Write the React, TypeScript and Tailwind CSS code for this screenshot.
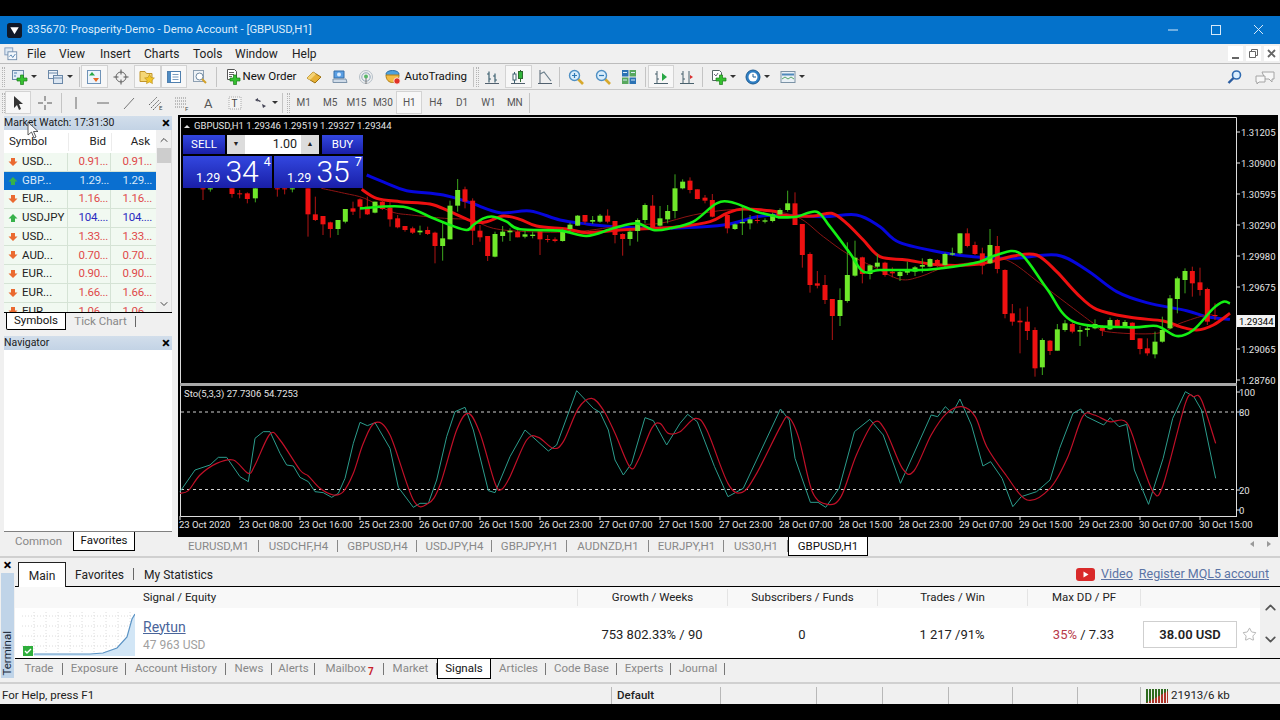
import type { ReactNode } from "react";
import { ChevronUp, ChevronDown, Star } from "lucide-react";

type Candle = number[];

// candles are read off the picture as [x, wickTop, bodyTop, bodyBottom, wickBottom, isGreen]
const seg1: Candle[] = [
  [75, 220, 220, 222, 255, 0], [97, 220, 220, 222, 230, 1], [162, 220, 220, 237, 248, 0], [185, 225, 235, 238, 250, 0],
  [208, 232, 235, 252, 265, 0], [232, 220, 220, 250, 262, 1], [298, 220, 220, 222, 245, 0], [320, 220, 220, 222, 238, 0],
  [343, 220, 220, 222, 232, 1], [390, 220, 220, 298, 365, 0], [412, 245, 298, 315, 318, 0], [435, 303, 303, 328, 360, 0],
  [457, 320, 322, 342, 368, 0], [480, 315, 315, 342, 360, 1], [502, 282, 282, 320, 325, 1], [525, 260, 280, 290, 300, 0],
];
const seg2: Candle[] = [
  [0, 115, 118, 140, 175, 0], [22, 110, 140, 163, 165, 0], [45, 125, 125, 158, 160, 1], [67, 120, 125, 147, 150, 0],
  [90, 125, 143, 178, 200, 0], [113, 165, 175, 202, 205, 0], [135, 198, 198, 210, 215, 0], [158, 200, 205, 218, 222, 0],
  [180, 197, 212, 217, 225, 1], [203, 200, 210, 222, 225, 0], [225, 215, 218, 258, 310, 0], [248, 185, 235, 258, 302, 1],
  [270, 122, 137, 238, 238, 1], [293, 57, 90, 137, 155, 1], [315, 80, 88, 125, 145, 0], [338, 115, 122, 212, 255, 0],
  [360, 195, 212, 232, 245, 0], [383, 228, 228, 288, 303, 0], [405, 215, 222, 290, 292, 1], [428, 198, 215, 228, 245, 1],
  [450, 205, 212, 217, 243, 1], [473, 210, 215, 232, 232, 0], [495, 212, 223, 230, 235, 1], [518, 215, 224, 228, 235, 1],
  [540, 212, 214, 238, 285, 0], [563, 225, 237, 240, 247, 0], [585, 232, 238, 243, 247, 0], [608, 205, 210, 243, 245, 1],
  [630, 188, 194, 207, 215, 1], [653, 165, 167, 197, 198, 1], [675, 165, 165, 185, 192, 0], [698, 168, 180, 185, 192, 1],
  [720, 162, 167, 185, 188, 1], [743, 148, 167, 185, 190, 0], [765, 183, 183, 225, 250, 0], [788, 220, 222, 237, 287, 0],
  [810, 210, 215, 237, 257, 1], [833, 175, 180, 213, 245, 1], [855, 130, 135, 180, 190, 1], [878, 105, 137, 205, 210, 0],
  [900, 138, 175, 197, 200, 1], [923, 135, 153, 178, 190, 1], [945, 43, 85, 153, 175, 1], [968, 58, 65, 85, 88, 1],
  [990, 52, 62, 90, 100, 0], [1012, 88, 88, 117, 118, 0], [1035, 105, 113, 122, 130, 0], [1057, 102, 120, 170, 172, 0],
  [1102, 160, 165, 205, 220, 0], [1125, 190, 193, 207, 210, 1], [1147, 140, 186, 190, 225, 1], [1170, 165, 178, 190, 208, 1],
  [1192, 165, 180, 183, 190, 0], [1215, 175, 181, 185, 190, 1], [1238, 158, 163, 183, 187, 1], [1260, 145, 150, 163, 165, 1],
  [1283, 92, 130, 150, 155, 1], [1305, 97, 130, 195, 195, 0],
];
const seg3: Candle[] = [
  [67, 312, 312, 405, 443, 0], [90, 397, 402, 495, 518, 0], [112, 453, 490, 497, 505, 0], [135, 465, 495, 540, 552, 0],
  [157, 537, 537, 588, 660, 0], [180, 505, 540, 588, 618, 1], [202, 367, 465, 543, 548, 1], [225, 362, 413, 467, 470, 1],
  [247, 410, 412, 462, 490, 0], [270, 433, 436, 462, 478, 1], [292, 402, 428, 440, 445, 1], [315, 425, 428, 465, 470, 0],
  [337, 442, 455, 460, 472, 0], [360, 452, 456, 468, 483, 1], [382, 425, 447, 458, 465, 1], [405, 438, 442, 455, 468, 1],
  [427, 415, 435, 440, 458, 1], [450, 415, 417, 440, 442, 1], [472, 417, 420, 435, 442, 0], [495, 398, 402, 435, 445, 1],
  [517, 383, 400, 404, 407, 1], [540, 340, 340, 400, 403, 1], [562, 325, 340, 378, 382, 0], [585, 365, 375, 402, 405, 0],
  [607, 383, 400, 437, 463, 0], [630, 327, 375, 430, 432, 1], [652, 348, 378, 447, 460, 0], [675, 448, 450, 582, 595, 0],
  [697, 552, 580, 605, 617, 0], [720, 565, 602, 607, 700, 0], [742, 560, 605, 633, 660, 0], [765, 622, 630, 745, 770, 0],
  [787, 655, 660, 742, 765, 1], [810, 660, 662, 693, 705, 0], [832, 612, 628, 692, 692, 1], [855, 600, 610, 630, 635, 1],
  [877, 607, 612, 635, 640, 0], [900, 618, 630, 635, 678, 1], [922, 615, 625, 630, 650, 1], [945, 598, 612, 625, 628, 1],
  [967, 615, 618, 632, 648, 0], [990, 593, 600, 628, 630, 1], [1012, 597, 600, 620, 622, 0], [1035, 600, 606, 618, 622, 1],
  [1057, 607, 608, 660, 660, 0], [1080, 655, 655, 687, 703, 0], [1102, 655, 685, 700, 707, 0], [1125, 635, 665, 703, 715, 1],
  [1147, 590, 630, 665, 668, 1], [1170, 525, 535, 625, 628, 1], [1192, 470, 475, 537, 580, 1], [1215, 445, 453, 480, 520, 1],
  [1237, 440, 453, 490, 530, 0], [1260, 443, 487, 510, 527, 0], [1282, 503, 507, 605, 615, 0], [1305, 550, 585, 587, 600, 0],
];

type Pt = [number, number];

const map = (ox: number, oy: number, sx: number, sy: number, a: number[]) => {
  const out: Pt[] = [];
  for (let i = 0; i < a.length; i += 2) out.push([ox + a[i] / sx, oy + a[i + 1] / sy]);
  return out;
};

// catmull-rom through the points, the moving averages are smooth in the picture
const smooth = (p: Pt[]) => {
  let d = `M${p[0][0]} ${p[0][1]}`;
  for (let i = 0; i < p.length - 1; i++) {
    const a = p[Math.max(i - 1, 0)];
    const b = p[i];
    const c = p[i + 1];
    const e = p[Math.min(i + 2, p.length - 1)];
    d += `C${b[0] + (c[0] - a[0]) / 6} ${b[1] + (c[1] - a[1]) / 6} ${c[0] - (e[0] - b[0]) / 6} ${c[1] - (e[1] - b[1]) / 6} ${c[0]} ${c[1]}`;
  }
  return d;
};

const blue = smooth([
  ...map(360, 160, 3, 3, [20, 45, 80, 70, 140, 92, 250, 105, 330, 128, 420, 158, 510, 153, 600, 180, 680, 192, 760, 200, 900, 205, 1090, 195, 1190, 170]),
  ...map(780, 120, 3, 3, [0, 285, 130, 290, 230, 285, 300, 320, 360, 368, 500, 400, 580, 410, 700, 415, 830, 405, 920, 450, 1010, 515, 1100, 548, 1220, 572, 1280, 590, 1350, 598]),
]);
const red = smooth([
  ...map(360, 160, 3, 3, [5, 88, 50, 115, 120, 125, 210, 132, 270, 155, 340, 185, 380, 185, 430, 168, 480, 178, 530, 198, 620, 207, 680, 218, 780, 210, 880, 205, 960, 200, 1050, 185, 1100, 160, 1150, 147, 1250, 155]),
  ...map(780, 120, 3, 3, [0, 285, 100, 288, 155, 280, 200, 310, 250, 360, 300, 410, 380, 420, 480, 435, 600, 432, 700, 408, 770, 405, 830, 455, 890, 520, 950, 568, 1050, 592, 1150, 603, 1200, 620, 1250, 630, 1300, 615, 1350, 580]),
]);
const green = smooth([
  ...map(360, 160, 3, 3, [0, 145, 130, 140, 220, 175, 270, 195, 320, 210, 340, 195, 370, 175, 400, 170, 440, 185, 480, 208, 600, 212, 680, 228, 760, 205, 830, 190, 880, 210, 930, 205, 1000, 185, 1070, 130, 1120, 128, 1190, 155, 1250, 170]),
  ...map(780, 120, 3, 3, [0, 292, 50, 290, 110, 275, 150, 320, 210, 400, 250, 455, 300, 450, 420, 450, 520, 440, 600, 425, 650, 405, 720, 400, 800, 505, 880, 605, 1050, 622, 1130, 618, 1190, 648, 1240, 630, 1300, 565, 1330, 545, 1350, 550]),
]);
const thin = smooth([
  ...map(178, 115, 3, 3, [430, 220, 500, 235, 560, 250, 640, 290, 700, 300, 800, 310, 880, 315]),
  ...map(360, 160, 3, 3, [400, 205, 500, 215, 650, 215, 800, 195, 900, 190, 1000, 165, 1100, 150, 1200, 150]),
  ...map(780, 120, 3, 3, [50, 290, 130, 350, 200, 400, 280, 440, 360, 478, 420, 470, 500, 440, 600, 425, 680, 420, 780, 490, 860, 550, 940, 610, 980, 635, 1130, 640, 1200, 610, 1280, 585, 1310, 590]),
]);
const stoMain = [
  ...map(180, 380, 3, 3, [0, 335, 45, 270, 90, 255, 115, 232, 140, 232, 180, 290, 205, 305, 225, 175, 250, 155, 270, 155, 300, 220, 320, 255, 340, 258, 360, 292, 385, 305, 405, 335, 430, 338, 455, 352, 475, 340, 495, 295, 520, 190, 540, 127, 562, 137, 585, 128, 630, 205, 655, 322, 700, 382, 720, 370, 745, 370, 770, 300, 800, 170, 825, 95, 855, 82, 880, 150, 925, 332, 945, 338, 990, 230, 1035, 150, 1105, 213, 1130, 195, 1190, 32, 1240, 85, 1260, 97, 1285, 150, 1305, 240, 1330, 285, 1355, 250, 1395, 113, 1420, 122, 1460, 195, 1500, 130]),
  ...map(680, 385, 2.608, 3, [20, 88, 45, 110, 90, 245, 125, 335, 165, 310, 262, 72, 285, 105, 300, 220, 340, 352, 360, 352, 380, 367, 415, 310, 455, 140, 495, 103, 530, 150, 575, 295, 655, 90, 672, 95, 692, 65, 710, 85, 730, 42, 760, 120, 790, 243, 810, 230, 840, 280, 868, 365, 890, 335, 930, 320, 965, 285, 990, 190, 1025, 85, 1045, 72, 1060, 95, 1105, 120, 1122, 98, 1145, 125, 1165, 118, 1185, 255, 1222, 358, 1260, 220, 1285, 100, 1318, 20, 1340, 35, 1360, 75, 1397, 280]),
].join(" ");
const stoSignal = smooth([
  ...map(180, 380, 3, 3, [0, 340, 25, 332, 60, 285, 110, 250, 160, 240, 205, 280, 225, 255, 270, 162, 300, 180, 360, 270, 385, 288, 420, 325, 460, 345, 490, 335, 520, 280, 550, 190, 585, 128, 630, 165, 700, 360, 745, 370, 780, 315, 830, 150, 865, 100, 900, 160, 945, 310, 965, 328, 990, 290, 1040, 180, 1075, 172, 1120, 205, 1150, 185, 1195, 85, 1235, 55, 1270, 90, 1305, 160, 1350, 262, 1375, 240, 1415, 145, 1440, 130, 1465, 160, 1500, 155]),
  ...map(680, 385, 2.608, 3, [40, 100, 70, 135, 125, 295, 162, 322, 200, 265, 262, 125, 283, 97, 310, 160, 345, 320, 385, 358, 420, 335, 460, 210, 505, 113, 535, 135, 580, 250, 610, 258, 655, 150, 695, 85, 735, 65, 770, 95, 800, 185, 850, 270, 905, 345, 965, 310, 1010, 220, 1050, 95, 1080, 90, 1120, 110, 1165, 113, 1200, 220, 1235, 322, 1260, 300, 1318, 55, 1340, 35, 1360, 45, 1397, 175]),
]);

const prices: [string, number][] = [
  ["1.31205", 132], ["1.30900", 163], ["1.30595", 194], ["1.30290", 225], ["1.29980", 256],
  ["1.29675", 287], ["1.29065", 349], ["1.28760", 380],
];
const stoLevels: [string, number][] = [["100", 392], ["80", 412], ["20", 490], ["0", 510]];
const times = [
  "23 Oct 2020", "23 Oct 08:00", "23 Oct 16:00", "25 Oct 23:00", "26 Oct 07:00", "26 Oct 15:00", "26 Oct 23:00", "27 Oct 07:00", "27 Oct 15:00",
  "27 Oct 23:00", "28 Oct 07:00", "28 Oct 15:00", "28 Oct 23:00", "29 Oct 07:00", "29 Oct 15:00", "29 Oct 23:00", "30 Oct 07:00", "30 Oct 15:00",
];

function Candles({ data, ox, oy }: { data: Candle[]; ox: number; oy: number }) {
  return (
    <>
      {data.map((c) => {
        const x = ox + c[0] / 3;
        return (
          <g key={c[0]}>
            <line x1={x} x2={x} y1={oy + c[1] / 3} y2={oy + c[4] / 3} stroke={c[5] ? "#3da81e" : "#b01414"} strokeWidth="1" />
            <rect x={x - 2.5} width="5" y={oy + c[2] / 3} height={Math.max((c[3] - c[2]) / 3, 1)} fill={c[5] ? "#6fe82a" : "#ee1111"} />
          </g>
        );
      })}
    </>
  );
}

function PriceChart() {
  return (
    <svg viewBox="178 115 1100 421" className="block h-[421px] w-[1100px]">
      <path d="M180.5 384V117.5H1236.5V517" fill="none" stroke="#dcdcdc" strokeWidth="1" />
      <path d="M180.5 386V516.5H1236.5" fill="none" stroke="#dcdcdc" strokeWidth="1" />
      <rect x="180" y="383" width="1057" height="3" fill="#a8a8a8" />
      <path d={blue} fill="none" stroke="#0606dc" strokeWidth="3" strokeLinejoin="round" />
      <path d={thin} fill="none" stroke="#8c1414" strokeWidth="1" strokeLinejoin="round" />
      <path d={red} fill="none" stroke="#ee1010" strokeWidth="3" strokeLinejoin="round" />
      <Candles data={seg1} ox={178} oy={115} />
      <Candles data={seg2} ox={360} oy={160} />
      <Candles data={seg3} ox={780} oy={120} />
      <path d={green} fill="none" stroke="#14f014" strokeWidth="2.6" strokeLinejoin="round" />

      <line x1="181" x2="1236" y1="412" y2="412" stroke="#d0d0d0" strokeDasharray="3 3" />
      <line x1="181" x2="1236" y1="489.5" y2="489.5" stroke="#d0d0d0" strokeDasharray="3 3" />
      <polyline points={stoMain} fill="none" stroke="#2b9c8c" strokeWidth="1" strokeLinejoin="round" />
      <path d={stoSignal} fill="none" stroke="#c01028" strokeWidth="1.2" strokeLinejoin="round" />

      <g fill="#e4e4e4" fontSize="9.5">
        <path d="M184 128l3-3 3 3z" />
        <text x="194" y="128.5">GBPUSD,H1  1.29346 1.29519 1.29327 1.29344</text>
        <text x="184" y="396.5">Sto(5,3,3) 27.7306 54.7253</text>
        {prices.map(([p, y]) => (
          <g key={p}>
            <line x1="1236" x2="1240" y1={y} y2={y} stroke="#e8e8e8" />
            <text x="1241" y={y + 3.5}>{p}</text>
          </g>
        ))}
        {stoLevels.map(([p, y]) => (
          <g key={p}>
            <line x1="1236" x2="1240" y1={y} y2={y} stroke="#e8e8e8" />
            <text x="1239" y={y + 3.5}>{p}</text>
          </g>
        ))}
        {times.map((t, i) => (
          <g key={t}>
            <line x1={180 + i * 60} x2={180 + i * 60} y1="516" y2="520" stroke="#e8e8e8" />
            <text x={179 + i * 60} y="528">{t}</text>
          </g>
        ))}
        <rect x="1237" y="315" width="38" height="12" fill="#f2f2f2" />
        <text x="1239" y="324.5" fill="#000">1.29344</text>
      </g>
    </svg>
  );
}

const blueBtn = "bg-gradient-to-b from-[#3347e0] to-[#1a1ea8] text-white";

function TradePanel() {
  return (
    <div className="absolute left-[5px] top-[20px] flex w-[180px] flex-col gap-[2px] text-white">
      <div className="flex h-[19px] items-center">
        <div className={`flex h-full w-[42px] items-center justify-center text-[11.5px] text-[#dfe4ff] ${blueBtn}`}>SELL</div>
        <div className="ml-[2px] flex h-full w-[92px] items-stretch bg-[#dcdcdc] text-[#222]">
          <div className="flex w-[18px] items-center justify-center text-[7px]">▼</div>
          <div className="flex flex-1 items-center justify-end bg-white pr-[4px] text-[12.5px]">1.00</div>
          <div className="flex w-[18px] items-center justify-center text-[7px]">▲</div>
        </div>
        <div className={`ml-[3px] flex h-full w-[41px] items-center justify-center text-[11.5px] text-[#dfe4ff] ${blueBtn}`}>BUY</div>
      </div>
      <div className="flex h-[32px] gap-[2px]">
        <PriceBox big="34" small="4" />
        <PriceBox big="35" small="7" />
      </div>
    </div>
  );
}

function PriceBox({ big, small }: { big: string; small: string }) {
  return (
    <div className={`relative flex w-[89px] items-end pl-[13px] ${blueBtn}`}>
      <span className="mb-[4px] text-[12.5px] leading-none">1.29</span>
      <span className="ml-[5px] text-[30px] font-light leading-[32px]">{big}</span>
      <span className="mb-[20px] ml-[5px] text-[12.5px] leading-none">{small}</span>
    </div>
  );
}

function Ico({ children, size = "h-4 w-4" }: { children: ReactNode; size?: string }) {
  return (
    <svg viewBox="0 0 16 16" className={`${size} shrink-0`}>
      {children}
    </svg>
  );
}

const plus = <path d="M8.5 6h3v3H15v3h-3.5v3.5h-3V12H5V9h3.5z" fill="#35c030" stroke="#1a7d1a" strokeWidth="0.7" />;

const icons: Record<string, ReactNode> = {
  newChart: <><rect x="0.5" y="1.5" width="11" height="9" fill="#e3edf7" stroke="#6b88a8" /><path d="M2 4h3M2 7h2" stroke="#4b7dab" />{plus}</>,
  profiles: <><rect x="0.5" y="1.5" width="9" height="8" fill="#eef3f9" stroke="#6b88a8" /><rect x="5.5" y="6.5" width="9" height="8" fill="#dbe6f2" stroke="#6b88a8" /><path d="M1 4h8M6 9h8" stroke="#6b88a8" /></>,
  market: <><rect x="1.5" y="1.5" width="13" height="13" fill="#edf4fb" stroke="#6f93b8" /><path d="M6 3l3 3.5H3z" fill="#27a845" /><path d="M7 9h6l-3 4z" fill="#e8691f" /></>,
  target: <><circle cx="8" cy="8" r="5" fill="none" stroke="#666" /><path d="M8 0.5v5M8 10.5v5M0.5 8h5M10.5 8h5" stroke="#555" /></>,
  folder: <><path d="M1 2.5h5l1.5 2H13v8H1z" fill="#f5d776" stroke="#c2962b" /><path d="M10.5 5.5l1.5 3 3.4 0.5-2.5 2.3 0.6 3.3-3-1.6-3 1.6 0.6-3.3L5.6 9 9 8.5z" fill="#f3c627" stroke="#b98d18" strokeWidth="0.6" /></>,
  list: <><rect x="1.5" y="2.5" width="13" height="11" fill="#fff" stroke="#4f7fae" /><rect x="2" y="3" width="3" height="10" fill="#4f8cc4" /><path d="M6.5 5.5h6M6.5 8h6M6.5 10.5h6" stroke="#7a9cbe" /></>,
  tester: <><rect x="1.5" y="1.5" width="10" height="11" fill="#eef2f6" stroke="#8ea0b2" /><circle cx="7.5" cy="7.5" r="3.5" fill="#fff" stroke="#708aa3" /><path d="M10 10l4 4" stroke="#d3a12a" strokeWidth="2" /></>,
  order: <><path d="M2.5 0.5h7l2 2v8h-9z" fill="#fff" stroke="#555" /><path d="M4 3.5h5M4 5.5h5M4 7.5h3" stroke="#666" />{plus}</>,
  diamond: <><path d="M1 9l6-6 8 5-6 6z" fill="#e7b136" stroke="#9c7112" /><path d="M1 9l6-6 3 2-6 6z" fill="#f5d376" /></>,
  editor: <><path d="M2 2h10v7H2z" fill="#5b9fe3" stroke="#376fa8" /><circle cx="7" cy="5.5" r="2" fill="#d9ecff" /><path d="M1 10h13l1 3.5H1z" fill="#cfdbe8" stroke="#7c93aa" /></>,
  radio: <><circle cx="8" cy="8" r="6.5" fill="none" stroke="#b6c0c8" /><circle cx="8" cy="8" r="4.2" fill="none" stroke="#8fa6b8" /><circle cx="8" cy="7.5" r="2" fill="#58b868" /><path d="M8 9v6" stroke="#777" /></>,
  auto: <><ellipse cx="7.5" cy="5" rx="6.5" ry="3.5" fill="#4ea2dc" stroke="#2c6fa5" /><path d="M1 6c0 5 3 7.5 6.5 7.5S14 11 14 6z" fill="#f2bc45" stroke="#b27f16" /><circle cx="12" cy="12" r="3.2" fill="#e03226" stroke="#fff" strokeWidth="0.8" /></>,
  bars: <><path d="M1 14.5h14" stroke="#51606e" /><path d="M5 2.5v11M3 5h2M5 10h2M11 4.5v9M9 7h2M11 11h2" stroke="#3d6070" fill="none" strokeWidth="1.2" /></>,
  candles: <><path d="M1 14.5h14" stroke="#51606e" /><path d="M4.5 3v11" stroke="#3d6070" /><rect x="3" y="5" width="3" height="6" fill="#fff" stroke="#3d6070" /><path d="M10.5 1v12" stroke="#2d6a30" /><rect x="8.5" y="2.5" width="4" height="7" fill="#31b53a" stroke="#2d6a30" /></>,
  lineChart: <><path d="M1 14.5h14M3 1v13" stroke="#51606e" /><path d="M3 5l4-2 7 9" fill="none" stroke="#6b7f8c" strokeWidth="1.2" /></>,
  zoomIn: <><path d="M10 10l5 5" stroke="#d7a92d" strokeWidth="2.6" /><circle cx="6.5" cy="6.5" r="5" fill="#d9edfb" stroke="#4f90c4" strokeWidth="1.4" /><path d="M4 6.5h5M6.5 4v5" stroke="#2e79b5" strokeWidth="1.2" /></>,
  zoomOut: <><path d="M10 10l5 5" stroke="#d7a92d" strokeWidth="2.6" /><circle cx="6.5" cy="6.5" r="5" fill="#d9edfb" stroke="#4f90c4" strokeWidth="1.4" /><path d="M4 6.5h5" stroke="#2e79b5" strokeWidth="1.2" /></>,
  tile: <><rect x="1" y="1" width="6.5" height="6.5" fill="#2c73b4" /><rect x="8.5" y="1" width="6.5" height="6.5" fill="#58a85e" /><rect x="1" y="8.5" width="6.5" height="6.5" fill="#58a85e" /><rect x="8.5" y="8.5" width="6.5" height="6.5" fill="#2c73b4" /><path d="M2 3.5h4M10 3.5h4M2 11h4M10 11h4" stroke="#d8ecf8" /></>,
  scroll: <><path d="M1 14.5h14M4 2v12M2 5h2M4 10h2" stroke="#48606c" /><path d="M9 4l5 4-5 4z" fill="#28a745" /></>,
  shift: <><path d="M1 14.5h14M4 2v12M2 5h2M4 10h2M10 2v12" stroke="#48606c" /><path d="M11 6l3 2-3 2z" fill="#d93030" /></>,
  indicator: <><path d="M1.5 1.5h7l2 2v8h-9z" fill="#fff" stroke="#556666" /><path d="M3 5l2 2 2-3" fill="none" stroke="#667" />{plus}</>,
  clock: <><circle cx="8" cy="8" r="7" fill="#2f7fc4" stroke="#1d5c93" /><circle cx="8" cy="8" r="4.5" fill="#fff" /><path d="M8 5v3h3" stroke="#1d5c93" fill="none" /></>,
  template: <><rect x="1" y="2.5" width="14" height="11" fill="#e9f0f6" stroke="#7c93a6" /><path d="M2 5.5h12" stroke="#4f89bb" strokeWidth="2" /><path d="M2 10l3-2 3 2 3-2 3 2" fill="none" stroke="#59a768" /></>,
  cursor: <path d="M4 1l0 12 3-3 2 5 2-1-2-5h4z" fill="#333" />,
  cross: <path d="M8 1v5M8 10v5M1 8h5M10 8h5" stroke="#555" />,
  vline: <path d="M8 2v12" stroke="#666" />,
  hline: <path d="M2 8h12" stroke="#666" />,
  trend: <path d="M3 14L13 3" stroke="#777" />,
  channel: <><path d="M1 10L9 2M3 13L11 5M5 15L13 7" stroke="#666" strokeDasharray="2 1" /><text x="11" y="15" fontSize="6" fill="#444">E</text></>,
  fibo: <><path d="M1 3h12M1 6h12M1 9h12M1 12h9" stroke="#888" strokeDasharray="1 1" /><text x="11" y="15.5" fontSize="6" fill="#444">F</text></>,
  letter: <text x="3" y="13" fontSize="13" fill="#555">A</text>,
  textBox: <><rect x="2" y="2" width="12" height="12" fill="#f4f4f4" stroke="#aaa" strokeDasharray="1 1" /><text x="4.5" y="12" fontSize="10" fill="#444">T</text></>,
  arrows: <path d="M2 5l3-2v1.5L8 6l-1 1-3-1.5L5 7zM9 9l4 2-3 2z" fill="#445" />,
};

function Caret() {
  return <span className="ml-[3px] h-0 w-0 border-x-[3px] border-t-[3px] border-x-transparent border-t-[#333]" />;
}

function Btn({ icon, on, caret, cls = "w-[26.5px]" }: { icon: string; on?: boolean; caret?: boolean; cls?: string }) {
  return (
    <div className={`flex h-[23px] shrink-0 items-center justify-center ${cls} ${on ? "border border-[#d3d3d3] bg-[#f7f7f7]" : ""}`}>
      <Ico>{icons[icon]}</Ico>
      {caret && <Caret />}
    </div>
  );
}

function Sep({ cls = "" }: { cls?: string }) {
  return <div className={`h-[20px] w-px shrink-0 bg-[#c4c4c4] ${cls}`} />;
}

function Grip({ cls = "" }: { cls?: string }) {
  return <div className={`h-[20px] w-[3px] shrink-0 border-x border-dotted border-[#b4b4b4] ${cls}`} />;
}

const periods = ["M1", "M5", "M15", "M30", "H1", "H4", "D1", "W1", "MN"];

function Toolbars() {
  return (
    <div className="relative flex flex-col bg-[#efefef] text-[11.5px] text-[#111]">
      <div className="flex h-[26px] items-center border-b border-[#c8c8c8] pl-[2px]">
        <Grip />
        <Btn icon="newChart" caret cls="ml-[3px] w-[33px]" />
        <Btn icon="profiles" caret cls="ml-[3px] w-[33px]" />
        <Sep cls="ml-[2px]" />
        <Btn icon="market" on cls="ml-[1px] w-[26.5px]" />
        <Btn icon="target" />
        <Btn icon="folder" on />
        <Btn icon="list" on />
        <Btn icon="tester" />
        <Sep cls="ml-[2px]" />
        <div className="ml-[8px] flex w-[75px] shrink-0 items-center gap-[2px]">
          <Ico>{icons.order}</Ico>
          <span className="whitespace-nowrap">New Order</span>
        </div>
        <Btn icon="diamond" cls="ml-[1px] w-[26px]" />
        <Btn icon="editor" cls="w-[26px]" />
        <Btn icon="radio" cls="w-[26px]" />
        <div className="ml-[6px] flex w-[87px] shrink-0 items-center gap-[4px]">
          <Ico>{icons.auto}</Ico>
          <span className="whitespace-nowrap">AutoTrading</span>
        </div>
        <Sep cls="ml-[1px]" />
        <Grip cls="ml-[2px]" />
        <Btn icon="bars" />
        <Btn icon="candles" on />
        <Btn icon="lineChart" />
        <Sep cls="ml-[1px]" />
        <Btn icon="zoomIn" cls="ml-[3px] w-[26.5px]" />
        <Btn icon="zoomOut" />
        <Btn icon="tile" />
        <Sep cls="ml-[2px]" />
        <Btn icon="scroll" on cls="ml-[2px] w-[26.5px]" />
        <Btn icon="shift" />
        <Sep cls="ml-[1px]" />
        <Btn icon="indicator" caret cls="ml-[5px] w-[32px]" />
        <Btn icon="clock" caret cls="ml-[2px] w-[32px]" />
        <Btn icon="template" caret cls="ml-[3px] w-[32px]" />
        <div className="ml-auto flex items-center gap-[11px] pr-[4px]">
          <svg viewBox="0 0 16 16" className="h-4 w-4">
            <circle cx="9.5" cy="6" r="4" fill="#dcefff" stroke="#2f6ab0" strokeWidth="1.6" />
            <path d="M6.5 9l-5 5" stroke="#2a5ca0" strokeWidth="2.4" />
          </svg>
          <svg viewBox="0 0 22 16" className="h-4 w-[22px]">
            <path d="M8 3h12v7h-2v3l-3-3H11z" fill="#f7f7f7" stroke="#a4a4a4" />
            <path d="M2 7h9v6H5l-2 2v-2H2z" fill="#f7f7f7" stroke="#a4a4a4" />
          </svg>
        </div>
      </div>
      <div className="flex h-[25px] items-center pl-[2px]">
        <Grip />
        <Btn icon="cursor" on cls="w-[26px]" />
        <Btn icon="cross" cls="ml-[1px] w-[26px]" />
        <Sep cls="ml-[3px]" />
        <Btn icon="vline" cls="ml-[1px] w-[26.5px]" />
        <Btn icon="hline" />
        <Btn icon="trend" />
        <Btn icon="channel" />
        <Btn icon="fibo" />
        <Btn icon="letter" />
        <Btn icon="textBox" />
        <Btn icon="arrows" caret cls="ml-[2px] w-[30px]" />
        <Sep cls="ml-[1px]" />
        <Grip cls="ml-[4px]" />
        {periods.map((p, i) => (
          <div
            key={p}
            className={`flex h-[23px] w-[26.4px] shrink-0 items-center justify-center text-[10px] text-[#555] ${i === 0 ? "ml-[1px]" : ""} ${p === "H1" ? "border border-[#d3d3d3] bg-[#f7f7f7]" : ""}`}
          >
            {p}
          </div>
        ))}
        <Sep cls="ml-[1px]" />
      </div>
    </div>
  );
}

function PanelHead({ title }: { title: string }) {
  return (
    <div className="flex h-[14px] shrink-0 items-center justify-between bg-gradient-to-b from-[#d2deeb] to-[#c3d3e5] pr-[2px] text-[10.5px] leading-none text-[#1a1a1a]">
      <span>{title}</span>
      <span className="text-[15px] font-bold leading-none text-black">×</span>
    </div>
  );
}

const quotes = [
  { s: "USD...", b: "0.91...", up: false },
  { s: "GBP...", b: "1.29...", up: true, sel: true },
  { s: "EUR...", b: "1.16...", up: false },
  { s: "USDJPY", b: "104....", up: true, blue: true },
  { s: "USD...", b: "1.33...", up: false },
  { s: "AUD...", b: "0.70...", up: false },
  { s: "EUR...", b: "0.90...", up: false },
  { s: "EUR...", b: "1.66...", up: false },
  { s: "EUR...", b: "1.06...", up: false },
];

function Arrow({ up }: { up: boolean }) {
  return (
    <svg viewBox="0 0 10 10" className="h-[10px] w-[10px] shrink-0">
      {up ? (
        <path d="M5 1l4.5 4.5H7V9H3V5.5H0.5z" fill="#37b24a" />
      ) : (
        <path d="M3 1h4v3.5h2.5L5 9 0.5 4.5H3z" fill="#ea6a30" />
      )}
    </svg>
  );
}

function MarketWatch() {
  return (
    <div className="flex h-[214px] shrink-0 flex-col">
      <PanelHead title="Market Watch: 17:31:30" />
      <div className="flex h-[182px] border-r border-[#dcdcdc]">
        <div className="flex w-[152px] flex-col bg-white">
          <div className="flex h-[23px] shrink-0 items-center bg-white pt-[1px] text-[11.5px] text-[#222]">
            <div className="w-[64px] pl-[5px]">Symbol</div>
            <div className="w-[43px] border-l border-[#ececec] pr-[5px] text-right">Bid</div>
            <div className="w-[45px] border-l border-[#ececec] pr-[6px] text-right">Ask</div>
          </div>
          <div className="flex-1 overflow-hidden">
            {quotes.map((q, i) => (
              <div
                key={i}
                className={`flex h-[18.7px] items-center border-b text-[11.5px] leading-none ${q.sel ? "border-[#0a6fd0] bg-[#0a6fd0] text-[#d8e8f8]" : "border-[#d5e3d5] bg-[#f1f9f1]"}`}
              >
                <div className={`flex h-full w-[64px] shrink-0 items-center gap-[4px] pl-[4px] ${q.sel ? "" : "border-r border-[#d5e3d5] text-[#222]"}`}>
                  <Arrow up={q.up} />
                  {q.s}
                </div>
                <div className={`flex h-full w-[43px] shrink-0 items-center justify-end pr-[2px] tracking-[-0.3px] ${q.sel ? "" : `border-r border-[#d5e3d5] ${q.blue ? "text-[#2a2ac0]" : "text-[#df4a4a]"}`}`}>{q.b}</div>
                <div className={`flex h-full w-[45px] shrink-0 items-center justify-end pr-[4px] tracking-[-0.3px] ${q.sel ? "" : q.blue ? "text-[#2a2ac0]" : "text-[#df4a4a]"}`}>{q.b}</div>
              </div>
            ))}
          </div>
        </div>
        <div className="flex w-[16px] flex-col items-center bg-[#f0f0f0] text-[#444]">
          <ChevronUp size={12} strokeWidth={2} className="mt-[4px]" />
          <div className="mt-[2px] h-[15px] w-[14px] bg-[#cdcdcd]" />
          <ChevronDown size={12} strokeWidth={2} className="mt-auto mb-[2px]" />
        </div>
      </div>
      <div className="flex h-[18px] shrink-0 border-t border-black text-[11.5px]">
        <div className="ml-[2px] flex w-[60px] items-center justify-center rounded-bl-[2px] border-x border-b border-black bg-white text-[#111]">Symbols</div>
        <div className="flex w-[69px] items-center justify-center text-[#888]">Tick Chart</div>
        <div className="my-[3px] w-px bg-[#666]" />
      </div>
    </div>
  );
}

function Navigator() {
  return (
    <div className="mt-[6px] flex flex-1 flex-col">
      <PanelHead title="Navigator" />
      <div className="flex-1 bg-white" />
      <div className="flex h-[20px] shrink-0 border-t border-[#808080] text-[11.5px]">
        <div className="flex w-[69px] items-center justify-center text-[#888]">Common</div>
        <div className="flex w-[62px] items-center justify-center border-x border-b border-black bg-white text-[#111]">Favorites</div>
      </div>
    </div>
  );
}

const chartTabs: [string, string][] = [
  ["EURUSD,M1", "w-[81px]"], ["USDCHF,H4", "w-[79px]"], ["GBPUSD,H4", "w-[79px]"], ["USDJPY,H4", "w-[75px]"], ["GBPJPY,H1", "w-[75px]"],
  ["AUDNZD,H1", "w-[82px]"], ["EURJPY,H1", "w-[75px]"], ["US30,H1", "w-[64px]"],
];

const bottomTabs: [string, string][] = [
  ["Trade", "w-[48px]"], ["Exposure", "w-[63px]"], ["Account History", "w-[100px]"], ["News", "w-[46px]"], ["Alerts", "w-[43px]"],
  ["Mailbox", "w-[69px]"], ["Market", "w-[53px]"], ["Signals", "w-[54px]"], ["Articles", "w-[55px]"], ["Code Base", "w-[71px]"],
  ["Experts", "w-[54px]"], ["Journal", "w-[54px]"],
];

const statusCells = ["w-[612px]", "w-[109px]", "w-[96px]", "w-[66px]", "w-[66px]", "w-[64px]", "w-[65px]", "w-[63px]"];

function Thumb() {
  const xs = [12, 24, 36, 48, 60, 72, 84, 96, 108];
  return (
    <svg viewBox="0 0 113 46" className="h-[46px] w-[113px] shrink-0">
      {xs.map((x) => (
        <line key={x} x1={x} x2={x} y1="2" y2="46" stroke="#dcdcdc" strokeDasharray="1 2" />
      ))}
      {[6, 16, 26, 36].map((y) => (
        <line key={y} x1="0" x2="113" y1={y} y2={y} stroke="#dcdcdc" strokeDasharray="1 2" />
      ))}
      <path d="M12 44H68L81 43 95 38 105 27 110 9 113 4V46H12z" fill="#d2e6f6" />
      <path d="M12 44H68L81 43 95 38 105 27 110 9 113 4" fill="none" stroke="#5b93c4" strokeWidth="1.2" />
      <rect x="1" y="36" width="10" height="10" fill="#2fae3c" />
      <path d="M3 41l2 2 4-4" fill="none" stroke="#fff" strokeWidth="1.4" />
    </svg>
  );
}

function Terminal() {
  return (
    <div className="flex h-[124px] bg-[#f0f0f0] text-[11.5px] text-[#222]">
      <div className="flex w-[15px] shrink-0 flex-col items-center">
        <span className="h-[15px] text-[15px] font-bold leading-[14px] text-black">×</span>
        <div className="mb-[4px] flex w-[13px] flex-1 items-end justify-center bg-[#c0d4e8]">
          <span className="rotate-180 pt-[2px] text-[11.5px] leading-[13px] text-[#1a2a3a] [writing-mode:vertical-rl]">Terminal</span>
        </div>
      </div>
      <div className="flex min-w-0 flex-1 flex-col">
        <div className="flex h-[29px] shrink-0 items-end border-b border-black text-[12px]">
          <div className="-mb-px ml-[3px] flex h-[25px] w-[48px] items-center justify-center border-x border-t border-[#222] border-b-[#fff] bg-white pt-[1px]">Main</div>
          <div className="flex h-[24px] w-[67px] items-center justify-center pt-[1px]">Favorites</div>
          <div className="mb-[6px] h-[12px] w-px bg-[#666]" />
          <div className="flex h-[24px] items-center pl-[10px] pt-[1px]">My Statistics</div>
          <div className="ml-auto flex h-[24px] items-center pr-[11px] text-[12.5px]">
            <svg viewBox="0 0 19 13" className="h-[13px] w-[19px]">
              <rect width="19" height="13" rx="3" fill="#d92a2a" />
              <path d="M7.5 3.5l5 3-5 3z" fill="#fff" />
            </svg>
            <span className="ml-[6px] text-[#5b74a5] underline">Video</span>
            <span className="ml-[6px] text-[#5b74a5] underline">Register MQL5 account</span>
          </div>
        </div>
        <div className="flex min-h-0 flex-1">
          <div className="flex min-w-0 flex-1 flex-col">
            <div className="grid h-[21px] shrink-0 grid-cols-[562px_150px_150px_150px_113px_120px] items-center bg-[#f8f8f8] text-[#222]">
              <div className="pl-[128px]">Signal / Equity</div>
              <div className="border-l border-[#e4e4e4] text-center">Growth / Weeks</div>
              <div className="border-l border-[#e4e4e4] text-center">Subscribers / Funds</div>
              <div className="border-l border-[#e4e4e4] text-center">Trades / Win</div>
              <div className="border-l border-[#e4e4e4] text-center">Max DD / PF</div>
              <div className="border-l border-[#e4e4e4]">&nbsp;</div>
            </div>
            <div className="grid h-[51px] shrink-0 grid-cols-[562px_150px_150px_150px_113px_120px] items-center border-b border-black bg-white text-[13px]">
              <div className="flex items-center pl-[7px]">
                <Thumb />
                <div className="ml-[8px] mt-[6px] flex flex-col gap-[1px]">
                  <span className="text-[14px] leading-[17px] text-[#4a659a] underline">Reytun</span>
                  <span className="text-[12px] leading-[17px] text-[#a0a0a0]">47 963 USD</span>
                </div>
              </div>
              <div className="mt-[3px] text-center">753 802.33% / 90</div>
              <div className="mt-[3px] text-center">0</div>
              <div className="mt-[3px] text-center">1 217 /91%</div>
              <div className="mt-[3px] text-center"><span className="text-[#b83a4a]">35%</span> / 7.33</div>
              <div className="mt-[3px] flex items-center pl-[3px]">
                <div className="flex h-[27px] w-[94px] items-center justify-center border border-[#cfcfcf] font-semibold">38.00 USD</div>
                <Star size={15} strokeWidth={1} className="ml-[5px] text-[#8a8a8a]" />
              </div>
            </div>
          </div>
          <div className="flex w-[20px] shrink-0 flex-col items-center border-b border-black text-[#555]">
            <ChevronUp size={17} strokeWidth={2.4} className="mt-[12px]" />
            <ChevronDown size={17} strokeWidth={2.4} className="mt-[15px]" />
          </div>
        </div>
        <div className="flex h-[23px] shrink-0 items-start">
          {bottomTabs.map(([t, w]) => (
            <div
              key={t}
              className={`flex h-[20px] shrink-0 items-center justify-center ${w} ${t === "Signals" ? "border-x border-b border-black bg-white text-[#111]" : "relative text-[#888] after:absolute after:right-0 after:top-[4px] after:h-[12px] after:w-px after:bg-[#777]"}`}
            >
              {t}
              {t === "Mailbox" && <span className="ml-[2px] mt-[5px] text-[10px] font-bold leading-none text-[#c81e2a]">7</span>}
            </div>
          ))}
        </div>
      </div>
    </div>
  );
}

function StatusBar() {
  return (
    <div className="flex h-[20px] items-center bg-[#f0f0f0] pt-[3px] text-[11.5px] text-[#222]">
      {statusCells.map((w, i) => (
        <div key={w + i} className={`flex h-full shrink-0 items-center border-r border-[#b8b8b8] ${w} ${i === 0 ? "pl-[2px]" : "pl-[5px]"}`}>
          {i === 0 && "For Help, press F1"}
          {i === 1 && <span className="font-medium">Default</span>}
        </div>
      ))}
      <div className="flex h-full flex-1 items-center pl-[5px]">
        <svg viewBox="0 0 22 14" className="h-[14px] w-[22px]">
          <rect width="22" height="14" fill="#2e6b1f" />
          <path d="M0 14L22 2V14z" fill="#b0352a" />
          <path d="M2.5 0v14M5.5 0v14M8.5 0v14M11.5 0v14M14.5 0v14M17.5 0v14M20.5 0v14" stroke="#f0f0f0" strokeWidth="1" />
        </svg>
        <span className="ml-[3px]">21913/6 kb</span>
      </div>
    </div>
  );
}

export default function App() {
  return (
    <div className="relative flex h-[720px] w-[1280px] flex-col overflow-hidden bg-black py-[16px] font-['Roboto','Noto_Sans',sans-serif] text-[11.5px]">
      <div className="flex h-[28px] shrink-0 items-center bg-[#0472cb] pl-[7px] text-[11.3px] text-[#dcecfa]">
        <svg viewBox="0 0 16 16" className="h-[15px] w-[15px]">
          <rect width="16" height="16" rx="3" fill="#101828" />
          <path d="M3.5 4.5h9L8 12z" fill="#fff" />
        </svg>
        <span className="ml-[5px]">835670: Prosperity-Demo - Demo Account - [GBPUSD,H1]</span>
        <div className="ml-auto flex items-center text-white">
          <svg viewBox="0 0 130 14" className="h-[14px] w-[130px]">
            <path d="M18 7h10" stroke="#d7e9f8" />
            <rect x="61.5" y="2.5" width="9" height="9" fill="none" stroke="#d7e9f8" />
            <path d="M104 2l9 9M113 2l-9 9" stroke="#d7e9f8" />
          </svg>
        </div>
      </div>
      <div className="flex h-[20px] shrink-0 items-center border-b border-[#bcbcbc] bg-[#f0f0f0] text-[12px] text-[#222]">
        <svg viewBox="0 0 16 16" className="ml-[4px] h-[14px] w-[14px]">
          <rect x="1" y="1" width="9" height="8" fill="#dde8f3" stroke="#7a97b8" />
          <rect x="4.5" y="5.5" width="10" height="9" fill="#f4f8fc" stroke="#6b88a8" />
          <path d="M6 11l2-2 2 3 3-4" fill="none" stroke="#4b7dab" />
        </svg>
        <span className="ml-[9px] w-[32px]">File</span>
        <span className="w-[41px]">View</span>
        <span className="w-[44px]">Insert</span>
        <span className="w-[49px]">Charts</span>
        <span className="w-[42px]">Tools</span>
        <span className="w-[57px]">Window</span>
        <span>Help</span>
        <div className="ml-auto flex items-center gap-[3px] pr-[1px] text-[#555]">
          <div className="flex h-[15px] w-[15px] items-end justify-center bg-white pb-[2px]"><div className="h-[2px] w-[7px] bg-[#666]" /></div>
          <svg viewBox="0 0 15 15" className="h-[15px] w-[15px] bg-white">
            <path d="M3.5 5.5h6v6h-6zM5.5 5.5v-2h6v6h-2" fill="none" stroke="#666" />
          </svg>
          <svg viewBox="0 0 15 15" className="h-[15px] w-[15px] bg-white">
            <path d="M4 4l7 7M11 4l-7 7" stroke="#666" strokeWidth="1.8" />
          </svg>
        </div>
      </div>
      <Toolbars />
      <div className="flex h-[441px] shrink-0 bg-[#f0f0f0]">
        <div className="flex w-[178px] shrink-0 flex-col pb-[5px] pl-[4px] pr-[6px] pt-[1px]">
          <MarketWatch />
          <Navigator />
        </div>
        <div className="flex min-w-0 flex-1 flex-col pr-[2px]">
          <div className="relative h-[421px] shrink-0 bg-black">
            <PriceChart />
            <TradePanel />
          </div>
          <div className="flex h-[20px] shrink-0 items-start border-t border-black text-[11.5px] text-[#888]">
            {chartTabs.map(([t, w]) => (
              <div key={t} className={`relative flex h-[18px] shrink-0 items-center justify-center pt-[1px] after:absolute after:right-0 after:top-[3px] after:h-[12px] after:w-px after:bg-[#888] ${w}`}>
                {t}
              </div>
            ))}
            <div className="flex h-[19px] w-[80px] shrink-0 items-center justify-center border-x border-b border-black bg-white pt-[1px] text-[#111]">GBPUSD,H1</div>
            <div className="ml-auto flex items-center gap-[13px] pr-[7px] pt-[4px] text-[#999]">
              <span className="h-0 w-0 border-y-[3px] border-r-[4px] border-y-transparent border-r-[#999]" />
              <span className="h-0 w-0 border-y-[3px] border-l-[4px] border-y-transparent border-l-[#999]" />
            </div>
          </div>
        </div>
      </div>
      <div className="h-[2px] shrink-0 bg-[#d0d0d0]" />
      <Terminal />
      <div className="h-[2px] shrink-0 bg-[#d0d0d0]" />
      <StatusBar />
      {/* mouse pointer caught in the recording */}
      <svg viewBox="0 0 12 18" className="absolute left-[27px] top-[121px] h-[18px] w-[12px]">
        <path d="M1 1v13l3.5-3 2.5 6 2-1-2.5-5.5H11z" fill="#fff" fillOpacity="0.85" stroke="#333" strokeWidth="0.8" />
      </svg>
    </div>
  );
}
